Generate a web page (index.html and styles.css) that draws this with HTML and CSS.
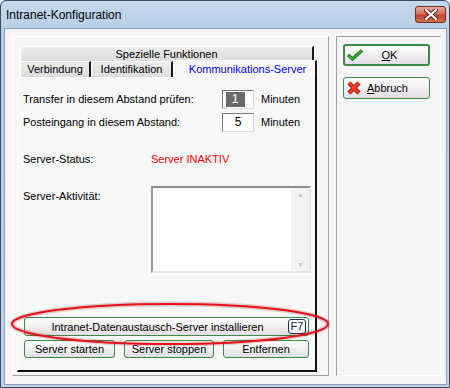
FILE: index.html
```html
<!DOCTYPE html>
<html lang="de">
<head>
  <meta charset="UTF-8">
  <title>Intranet-Konfiguration</title>
  <link rel="stylesheet" href="styles.css">
</head>
<body>
<div class="window">
  <div class="titlebar">
    <span class="title">Intranet-Konfiguration</span>
    <span class="close-btn">
      <svg width="14" height="11" viewBox="0 0 14 11">
        <path d="M2 1 L12 10 M12 1 L2 10" stroke="#5a1a12" stroke-width="4" stroke-linecap="square"/>
        <path d="M2 1 L12 10 M12 1 L2 10" stroke="#fff" stroke-width="2.2" stroke-linecap="square"/>
      </svg>
    </span>
  </div>

  <div class="client">
    <div class="left-box">
      <div class="tabs">
        <div class="tab-row top">
          <div class="tab wide">Spezielle Funktionen</div>
        </div>
        <div class="tab-row">
          <div class="tab t-verb">Verbindung</div>
          <div class="tab t-ident">Identifikation</div>
          <div class="tab active">Kommunikations-Server</div>
        </div>
      </div>

      <div class="panel">
        <div class="field-row first">
          <span class="label">Transfer in diesem Abstand prüfen:</span>
          <span class="num-input"><span class="sel">1</span></span>
          <span class="unit">Minuten</span>
        </div>
        <div class="field-row">
          <span class="label">Posteingang in diesem Abstand:</span>
          <span class="num-input">5</span>
          <span class="unit">Minuten</span>
        </div>

        <div class="status-row">
          <span class="label short">Server-Status:</span>
          <span class="status-off">Server INAKTIV</span>
        </div>

        <div class="activity-row">
          <span class="label short act">Server-Aktivität:</span>
          <div class="memo">
            <div class="memo-text"></div>
            <div class="scrollbar">
              <span class="arrow">&#9650;</span>
              <span class="arrow">&#9660;</span>
            </div>
          </div>
        </div>

        <div class="btn install">
          <span class="install-text">Intranet-Datenaustausch-Server installieren</span>
          <span class="key">F7</span>
        </div>
        <div class="btn-row">
          <div class="btn b-start">Server starten</div>
          <div class="btn b-stop">Server stoppen</div>
          <div class="btn b-del">Entfernen</div>
        </div>
      </div>
    </div>

    <div class="right-box">
      <div class="btn side default">
        <svg class="ico" width="16" height="12" viewBox="0 0 16 12">
          <path d="M1 6 L5.5 10 L15 1.5" fill="none" stroke="#1d6b1d" stroke-width="3.2"/>
          <path d="M1 6 L5.5 10 L15 1.5" fill="none" stroke="#39b339" stroke-width="1.6"/>
        </svg>
        <span class="side-text"><u>O</u>K</span>
      </div>
      <div class="btn side">
        <svg class="ico" width="14" height="14" viewBox="0 0 14 14">
          <path d="M2 2 L12 12 M12 2 L2 12" stroke="#8a1010" stroke-width="4.4"/>
          <path d="M2 2 L12 12 M12 2 L2 12" stroke="#f03a2a" stroke-width="2.6"/>
        </svg>
        <span class="side-text left"><u>A</u>bbruch</span>
      </div>
    </div>
  </div>

  <!-- rote Markierung ueber dem Install-Button -->
  <svg class="mark" width="322" height="48" viewBox="0 0 322 48">
    <ellipse cx="161" cy="24" rx="158" ry="20" fill="none" stroke="rgba(120,0,0,0.18)" stroke-width="5"/>
    <ellipse cx="161" cy="24" rx="158" ry="20" fill="none" stroke="#e8101a" stroke-width="2"/>
  </svg>
</div>
</body>
</html>
```

FILE: styles.css
```css
body {
  margin: 0;
  background: #ffffff;
  font-family: "Liberation Sans", Arial, sans-serif;
  font-size: 11px;
  color: #000;
}

.window {
  position: relative;
  width: 450px;
  height: 388px;
  box-sizing: border-box;
  border: 1px solid #3d4a5a;
  border-radius: 6px 6px 0 0;
  background: linear-gradient(#c5d8ee, #b8cfe8 30px, #bcd2ea);
  display: flex;
  flex-direction: column;
}

.titlebar {
  height: 27px;
  display: flex;
  align-items: center;
  justify-content: space-between;
  padding: 0 3px 0 5px;
}

.title {
  font-size: 12px;
  color: #000;
  margin-top: 1px;
}

.close-btn {
  width: 31px;
  height: 17px;
  box-sizing: border-box;
  border: 1px solid #6b2a22;
  border-radius: 3px;
  background: linear-gradient(#e9a99a, #d2705c 45%, #c0432c 55%, #d2704f);
  display: flex;
  align-items: center;
  justify-content: center;
  margin-top: -1px;
}

.client {
  flex: 1;
  margin: 0 2px 2px 3px;
  border: 1px solid #8a9db5;
  background: #f5f5f5;
  display: flex;
  gap: 7px;
  padding: 7px 0 0 7px;
}

.left-box {
  width: 317px;
  height: 340px;
  box-sizing: border-box;
  border: 1px solid;
  border-color: #ffffff #a0a0a0 #a0a0a0 #ffffff;
  padding: 9px 0 0 4px;
}

.right-box {
  width: 105px;
  height: 340px;
  box-sizing: border-box;
  border: 1px solid;
  border-color: #a0a0a0 #ffffff #ffffff #a0a0a0;
  padding: 7px 0 0 6px;
  display: flex;
  flex-direction: column;
  gap: 11px;
}

/* Reiter */
.tabs {
  width: 300px;
}

.tab-row {
  display: flex;
  height: 16px;
}

.tab-row.top {
  height: 15px;
}

.tab {
  box-sizing: border-box;
  border-top: 1px solid #ffffff;
  border-left: 1px solid #ffffff;
  border-right: 2px solid #1a1a1a;
  background: linear-gradient(#ededed, #dcdcdc);
  text-align: center;
  line-height: 15px;
}

.tab.wide {
  margin-left: 3px;
  width: 294px;
}

.t-verb {
  margin-left: 3px;
  width: 71px;
}

.t-ident {
  width: 82px;
}

.tab.active {
  width: 144px;
  height: 18px;
  margin-top: -1px;
  background: #f7f7f7;
  color: #0000f0;
  position: relative;
  z-index: 1;
  line-height: 16px;
  padding-left: 6px;
}

.panel {
  width: 300px;
  height: 295px;
  box-sizing: border-box;
  border-top: 1px solid #ffffff;
  border-left: 1px solid #ffffff;
  border-right: 2px solid #111;
  border-bottom: 2px solid #111;
  background: #f7f7f7;
  padding: 0 0 0 5px;
}

.field-row {
  display: flex;
  align-items: center;
  height: 20px;
  margin-top: 3px;
}

.field-row.first {
  margin-top: 11px;
}

.label {
  width: 199px;
}

.label.short {
  width: 128px;
}

.num-input {
  width: 32px;
  height: 19px;
  box-sizing: border-box;
  border: 1px solid;
  border-color: #7a7a7a #dcdcdc #dcdcdc #7a7a7a;
  background: #fff;
  display: flex;
  align-items: center;
  justify-content: center;
  font-size: 12px;
}

.sel {
  background: #6a6a6a;
  color: #fff;
  width: 19px;
  height: 15px;
  line-height: 15px;
  text-align: center;
  margin-left: -6px;
}

.unit {
  margin-left: 7px;
}

.status-row {
  display: flex;
  margin-top: 20px;
  height: 14px;
  line-height: 14px;
}

.status-off {
  color: #ff0000;
}

.activity-row {
  display: flex;
  margin-top: 20px;
}

.act {
  width: 127px;
  margin-top: 4px;
}

.memo {
  width: 160px;
  height: 87px;
  box-sizing: border-box;
  border: 2px solid;
  border-color: #8c8c8c #e4e4e4 #e4e4e4 #9a9a9a;
  background: #fff;
  display: flex;
}

.memo-text {
  flex: 1;
}

.scrollbar {
  width: 17px;
  background: #f4f2f4;
  border-left: 1px solid #f0eef0;
  display: flex;
  flex-direction: column;
  justify-content: space-between;
  align-items: center;
  color: #c8c8c8;
  font-size: 7px;
  padding: 3px 0;
}

/* Knoepfe */
.btn {
  box-sizing: border-box;
  border: 1px solid #3b8a47;
  border-radius: 3px;
  background: linear-gradient(#ffffff, #f4f2f4 40%, #e2dde2);
  display: flex;
  align-items: center;
  justify-content: center;
}

.install {
  width: 285px;
  height: 19px;
  margin: 44px 0 0 1px;
  padding-right: 2px;
}

.install-text {
  flex: 1;
  text-align: center;
  padding-left: 2px;
}

.key {
  width: 18px;
  height: 15px;
  box-sizing: border-box;
  border: 1px solid #1f3456;
  border-radius: 3px;
  background: linear-gradient(#ffffff, #e6eaf0);
  color: #1a2a40;
  font-size: 11px;
  line-height: 13px;
  text-align: center;
}

.btn-row {
  display: flex;
  gap: 9px;
  margin: 4px 0 0 1px;
}

.btn-row .btn {
  height: 18px;
}

.b-start { width: 91px; }
.b-stop { width: 90px; }
.b-del { width: 86px; }

.btn.side {
  width: 87px;
  height: 22px;
  justify-content: flex-start;
  padding-left: 3px;
  position: relative;
}

.btn.default {
  border: 2px solid #3b8a47;
  padding-left: 2px;
}

.side-text {
  flex: 1;
  text-align: center;
  padding-right: 12px;
}

.side-text.left {
  flex: none;
  margin-left: 6px;
  padding: 0;
}

.mark {
  position: absolute;
  left: 8px;
  top: 299px;
}
```
